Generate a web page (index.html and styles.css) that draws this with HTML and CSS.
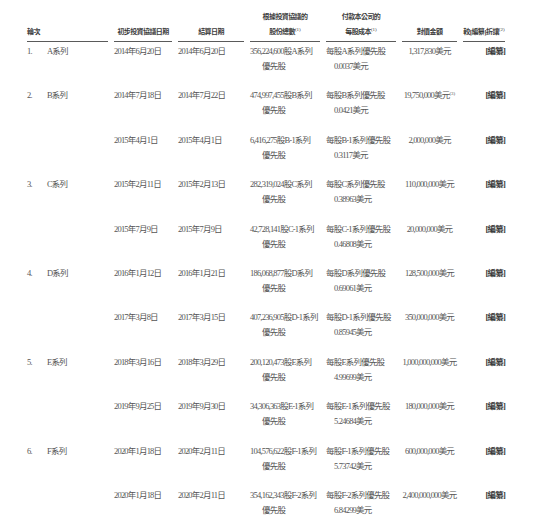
FILE: index.html
```html
<!DOCTYPE html>
<html lang="zh-Hant">
<head>
<meta charset="utf-8">
<title>投資</title>
<link rel="stylesheet" href="styles.css">
</head>
<body>
<div class="table">
  <div class="th th-left">輪次</div>
  <div class="th">初步投資協議日期</div>
  <div class="th">結算日期</div>
  <div class="th">根據投資協議的<br>股份總數<sup>(1)</sup></div>
  <div class="th">付款本公司的<br>每股成本<sup>(1)</sup></div>
  <div class="th">對價金額</div>
  <div class="th">較[編纂]折讓<sup>(2)</sup></div>

  <div class="td round"><span class="num">1.</span><span>A系列</span></div>
  <div class="td">2014年6月20日</div>
  <div class="td">2014年6月20日</div>
  <div class="td shares"><span class="l1">356,224,600股A系列</span><span class="l2">優先股</span></div>
  <div class="td price"><span class="l1">每股A系列優先股</span><span class="l2">0.0037美元</span></div>
  <div class="td amount">1,317,830美元</div>
  <div class="td redact">[編纂]</div>

  <div class="td round"><span class="num">2.</span><span>B系列</span></div>
  <div class="td">2014年7月18日</div>
  <div class="td">2014年7月22日</div>
  <div class="td shares"><span class="l1">474,997,455股B系列</span><span class="l2">優先股</span></div>
  <div class="td price"><span class="l1">每股B系列優先股</span><span class="l2">0.0421美元</span></div>
  <div class="td amount">19,750,000美元<sup>(3)</sup></div>
  <div class="td redact">[編纂]</div>

  <div class="td round"></div>
  <div class="td">2015年4月1日</div>
  <div class="td">2015年4月1日</div>
  <div class="td shares"><span class="l1">6,416,275股B-1系列</span><span class="l2">優先股</span></div>
  <div class="td price"><span class="l1">每股B-1系列優先股</span><span class="l2">0.3117美元</span></div>
  <div class="td amount">2,000,000美元</div>
  <div class="td redact">[編纂]</div>

  <div class="td round"><span class="num">3.</span><span>C系列</span></div>
  <div class="td">2015年2月11日</div>
  <div class="td">2015年2月13日</div>
  <div class="td shares"><span class="l1">282,319,024股C系列</span><span class="l2">優先股</span></div>
  <div class="td price"><span class="l1">每股C系列優先股</span><span class="l2">0.38963美元</span></div>
  <div class="td amount">110,000,000美元</div>
  <div class="td redact">[編纂]</div>

  <div class="td round"></div>
  <div class="td">2015年7月9日</div>
  <div class="td">2015年7月9日</div>
  <div class="td shares"><span class="l1">42,728,141股C-1系列</span><span class="l2">優先股</span></div>
  <div class="td price"><span class="l1">每股C-1系列優先股</span><span class="l2">0.46808美元</span></div>
  <div class="td amount">20,000,000美元</div>
  <div class="td redact">[編纂]</div>

  <div class="td round"><span class="num">4.</span><span>D系列</span></div>
  <div class="td">2016年1月12日</div>
  <div class="td">2016年1月21日</div>
  <div class="td shares"><span class="l1">186,068,877股D系列</span><span class="l2">優先股</span></div>
  <div class="td price"><span class="l1">每股D系列優先股</span><span class="l2">0.69061美元</span></div>
  <div class="td amount">128,500,000美元</div>
  <div class="td redact">[編纂]</div>

  <div class="td round"></div>
  <div class="td">2017年3月8日</div>
  <div class="td">2017年3月15日</div>
  <div class="td shares"><span class="l1">407,236,905股D-1系列</span><span class="l2">優先股</span></div>
  <div class="td price"><span class="l1">每股D-1系列優先股</span><span class="l2">0.85945美元</span></div>
  <div class="td amount">350,000,000美元</div>
  <div class="td redact">[編纂]</div>

  <div class="td round"><span class="num">5.</span><span>E系列</span></div>
  <div class="td">2018年3月16日</div>
  <div class="td">2018年3月29日</div>
  <div class="td shares"><span class="l1">200,120,473股E系列</span><span class="l2">優先股</span></div>
  <div class="td price"><span class="l1">每股E系列優先股</span><span class="l2">4.99699美元</span></div>
  <div class="td amount">1,000,000,000美元</div>
  <div class="td redact">[編纂]</div>

  <div class="td round"></div>
  <div class="td">2019年9月25日</div>
  <div class="td">2019年9月30日</div>
  <div class="td shares"><span class="l1">34,306,363股E-1系列</span><span class="l2">優先股</span></div>
  <div class="td price"><span class="l1">每股E-1系列優先股</span><span class="l2">5.24684美元</span></div>
  <div class="td amount">180,000,000美元</div>
  <div class="td redact">[編纂]</div>

  <div class="td round"><span class="num">6.</span><span>F系列</span></div>
  <div class="td">2020年1月18日</div>
  <div class="td">2020年2月11日</div>
  <div class="td shares"><span class="l1">104,576,622股F-1系列</span><span class="l2">優先股</span></div>
  <div class="td price"><span class="l1">每股F-1系列優先股</span><span class="l2">5.73742美元</span></div>
  <div class="td amount">600,000,000美元</div>
  <div class="td redact">[編纂]</div>

  <div class="td round"></div>
  <div class="td">2020年1月18日</div>
  <div class="td">2020年2月11日</div>
  <div class="td shares"><span class="l1">354,162,343股F-2系列</span><span class="l2">優先股</span></div>
  <div class="td price"><span class="l1">每股F-2系列優先股</span><span class="l2">6.84299美元</span></div>
  <div class="td amount">2,400,000,000美元</div>
  <div class="td redact">[編纂]</div>
</div>
</body>
</html>
```
FILE: styles.css
```css
html, body {
  margin: 0;
  padding: 0;
  background: #ffffff;
}
body {
  font-family: "Liberation Serif", "Noto Sans CJK TC", serif;
  font-size: 8.5px;
  letter-spacing: -0.8px;
  color: #555555;
}
.table {
  display: grid;
  grid-template-columns: 81px 58px 66px 70px 70px 55px 42px;
  grid-template-rows: auto repeat(11, 44.4px);
  column-gap: 6px;
  padding: 10px 0 0 27px;
}
.th {
  align-self: end;
  text-align: center;
  font-weight: bold;
  font-size: 7px;
  letter-spacing: -0.6px;
  line-height: 15px;
  padding-bottom: 1px;
  color: #3c3c3c;
  border-bottom: 1px solid #5a5a5a;
  white-space: nowrap;
}
.th-left {
  text-align: left;
}
sup {
  font-size: 5px;
  line-height: 0;
  vertical-align: 3px;
  letter-spacing: 0;
  font-weight: normal;
}
.td {
  line-height: 15px;
  padding-top: 2px;
  white-space: nowrap;
}
.round {
  display: flex;
}
.num {
  width: 20px;
}
.shares, .price {
  display: flex;
  flex-direction: column;
}
.shares .l2 {
  padding-left: 12px;
}
.price .l2 {
  padding-left: 8px;
}
.amount {
  text-align: center;
}
.redact {
  text-align: right;
  font-weight: bold;
  color: #3a3a3a;
}
```
